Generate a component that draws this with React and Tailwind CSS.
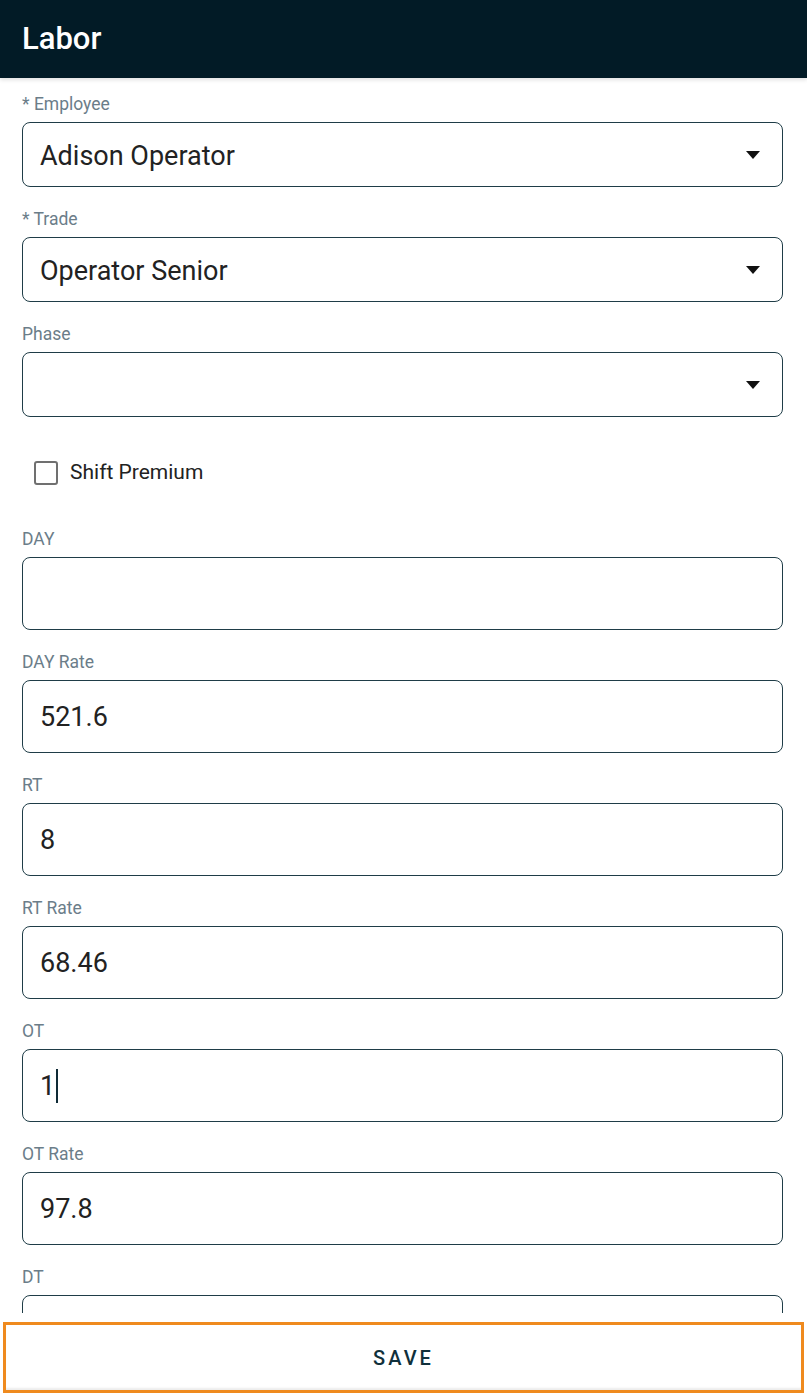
import React from 'react';

// Labor entry form — header, stacked fields, sticky save bar.
const font = { fontFamily: 'Roboto, "Noto Sans", Arial, sans-serif' };

const Label = ({ children }) => (
    <div className="text-[17.5px] leading-[20px] text-[#6b7d89] mb-2">{children}</div>
);

const SelectField = ({ label, value }) => (
    <div className="mb-[22px]">
        <Label>{label}</Label>
        <div className="h-[65px] rounded-[8px] border-[1.5px] border-[#1f3d47] flex items-center justify-between pl-[17px] pr-[22px]">
            <span className="text-[27px] text-[#222] pt-[4px]">{value}</span>
            <svg width="14" height="8" viewBox="0 0 14 8">
                <path d="M0 0 L14 0 L7 8 Z" fill="#111" />
            </svg>
        </div>
    </div>
);

const TextField = ({ label, value, caret }) => (
    <div className="mb-[22px]">
        <Label>{label}</Label>
        <div className="h-[73px] rounded-[8px] border-[1.5px] border-[#1f3d47] flex items-center pl-[17px]">
            <span className="text-[27px] text-[#222] pt-[2px]">{value}</span>
            {caret && <span className="ml-[1px] w-[2px] h-[34px] bg-[#0f2b36]" />}
        </div>
    </div>
);

export default function App() {
    return (
        <div className="h-[1399px] overflow-hidden bg-white flex flex-col" style={font}>
            <header className="h-[78px] shrink-0 bg-[#021b26] flex items-center px-[22px] shadow-[0_2px_4px_rgba(0,0,0,0.12)] z-10">
                <h1 className="text-white text-[31px] font-medium">Labor</h1>
            </header>

            <main className="flex-1 overflow-hidden pl-[22px] pr-[24px] pt-4">
                <SelectField label="* Employee" value="Adison Operator" />
                <SelectField label="* Trade" value="Operator Senior" />
                <SelectField label="Phase" value="" />

                <label className="flex items-center gap-3 mt-[44px] mb-[44px] pl-3 h-6">
                    <span className="w-6 h-6 rounded-[3px] border-2 border-[#707070]" />
                    <span className="text-[21px] text-[#222]">Shift Premium</span>
                </label>

                <TextField label="DAY" value="" />
                <TextField label="DAY Rate" value="521.6" />
                <TextField label="RT" value="8" />
                <TextField label="RT Rate" value="68.46" />
                <TextField label="OT" value="1" caret />
                <TextField label="OT Rate" value="97.8" />
                <TextField label="DT" value="" />
            </main>

            {/* Save bar sits over the scrolling form */}
            <div className="fixed bottom-0 left-0 right-0 flex flex-col">
                <div className="h-[9px] bg-white" />
                <div className="px-[3px] bg-white">
                    <div className="h-[71px] border-[3px] border-[#ef8a1e] bg-white/95 shadow-[inset_0_-3px_2px_-1px_rgba(0,0,0,0.08)] flex items-center justify-center">
                        <span className="text-[20px] font-medium tracking-[0.15em] text-[#10303b]">SAVE</span>
                    </div>
                </div>
                <div className="h-[6px] bg-white" />
            </div>
        </div>
    );
}
